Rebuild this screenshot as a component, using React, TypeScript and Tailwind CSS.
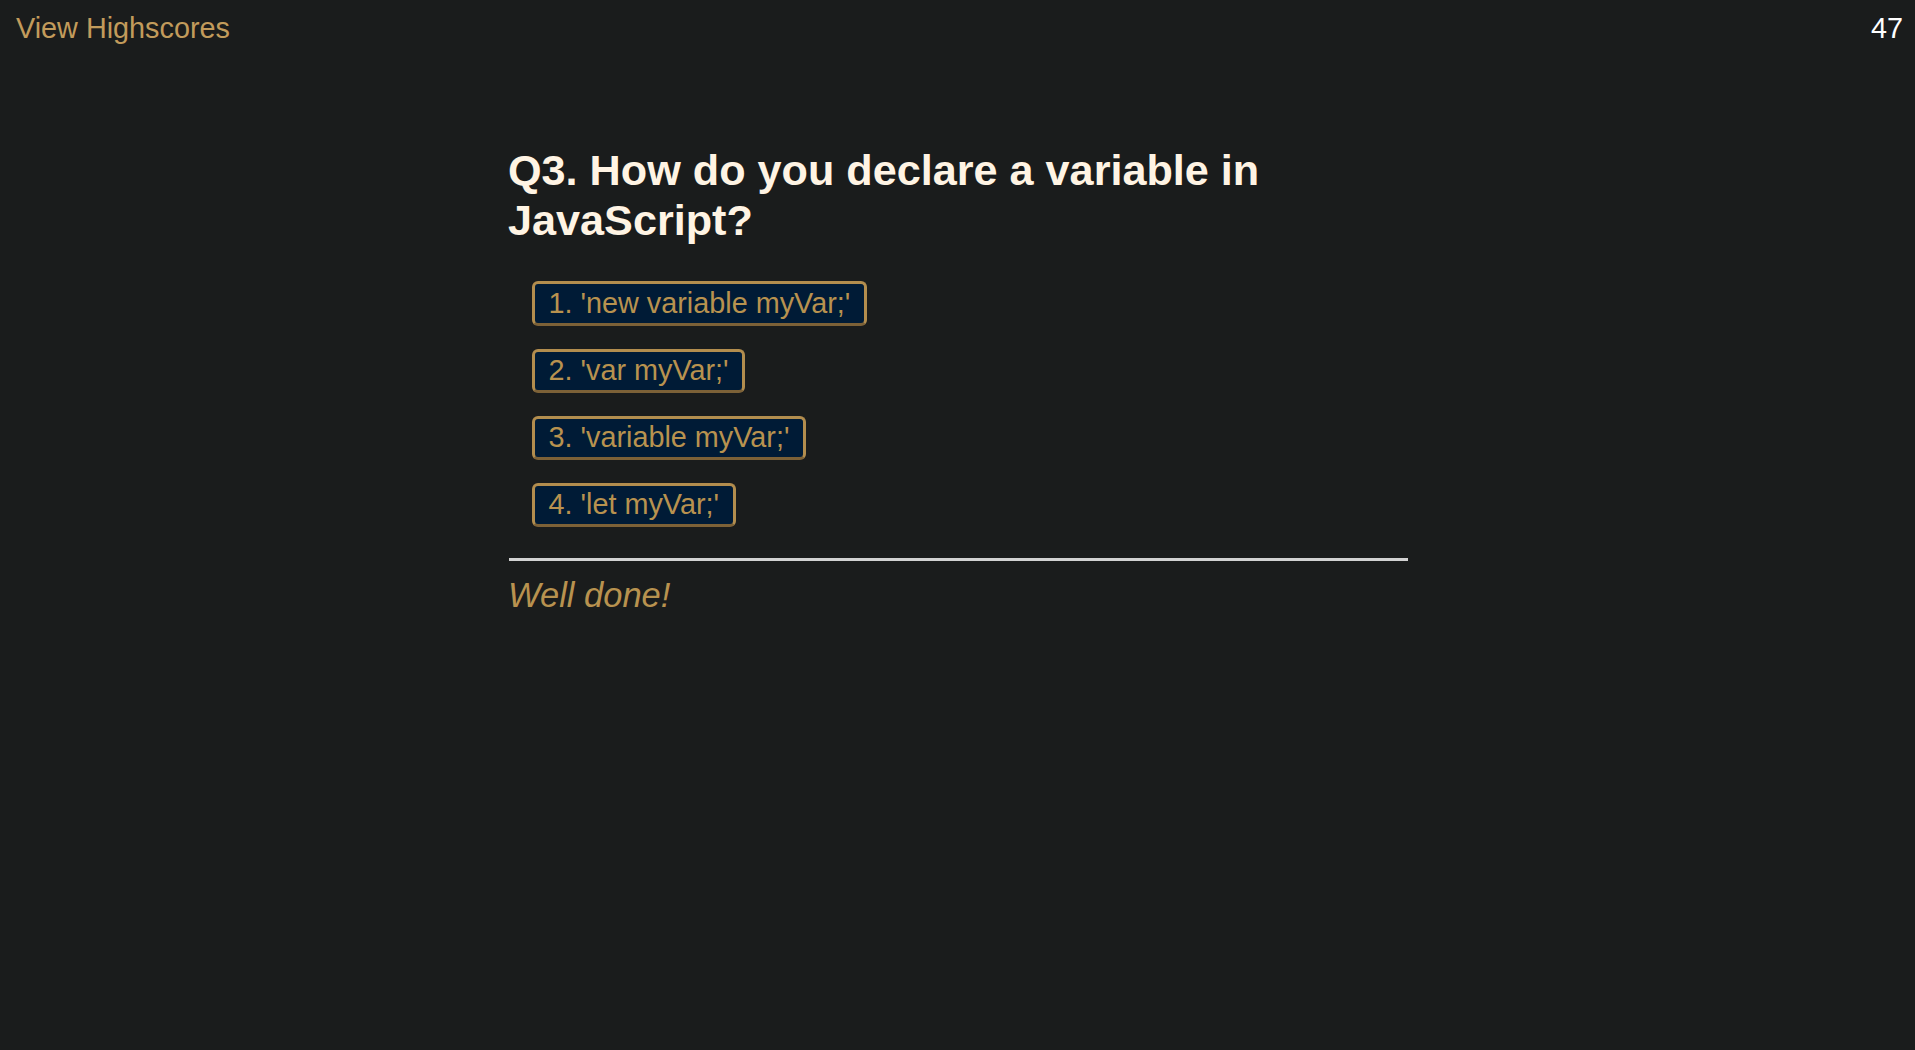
import React from "react"

const answers = [
    "1. 'new variable myVar;'",
    "2. 'var myVar;'",
    "3. 'variable myVar;'",
    "4. 'let myVar;'",
]

function Header({ time }: { time: number }) {
    return (
        <header className="flex justify-between items-start pl-[16px] pr-[12px] pt-[11.5px]">
            <a className="text-[28.8px] leading-[1.15] text-[#c29b5b] cursor-pointer">View Highscores</a>
            <span className="text-[28.8px] leading-[1.15] text-white">{time}</span>
        </header>
    )
}

function AnswerButton({ label }: { label: string }) {
    return (
        <button className="text-[28.8px] leading-[1.15] text-[#b8924f] bg-[#001b36] border-[3px] border-[#b28d4e] border-b-[#7c6137] rounded-[6px] px-[13.5px] py-[2.5px]">
            {label}
        </button>
    )
}

export default function App() {
    return (
        <div className="min-h-screen bg-[#1a1c1c] font-['Liberation_Sans',Arial,sans-serif]">
            <Header time={47} />
            <main className="w-[900px] ml-[508px] mt-[101.5px]">
                <h1 className="text-[43.2px] leading-[1.15] font-bold text-[#fff4e4]">
                    Q3. How do you declare a variable in JavaScript?
                </h1>
                <div className="flex flex-col items-start gap-[23px] ml-[24px] mt-[36px]">
                    {answers.map((answer, index) => (
                        <AnswerButton key={index} label={answer} />
                    ))}
                </div>
                <div className="h-[3px] bg-[#d2d2d2] mt-[31px] ml-[1px]"></div>
                <p className="italic text-[34.5px] leading-[1.15] text-[#b8924f] mt-[15px]">Well done!</p>
            </main>
        </div>
    )
}
